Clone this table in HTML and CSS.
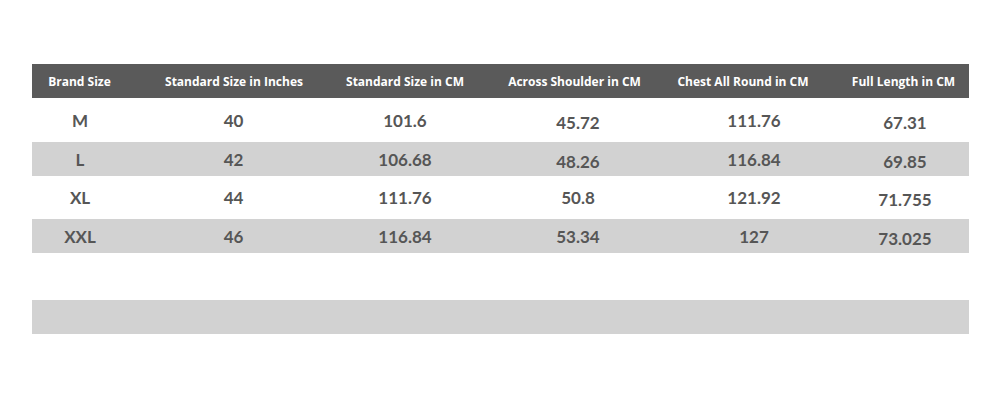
FILE: index.html
```html
<!DOCTYPE html>
<html>
<head>
<meta charset="utf-8">
<link rel="stylesheet" href="styles.css">
</head>
<body>
<div class="chart">
  <div class="row head">
    <div class="c c1">Brand Size</div>
    <div class="c c2">Standard Size in Inches</div>
    <div class="c c3">Standard Size in CM</div>
    <div class="c c4">Across Shoulder in CM</div>
    <div class="c c5">Chest All Round in CM</div>
    <div class="c c6">Full Length in CM</div>
  </div>
  <div class="row data tall">
    <div class="c c1">M</div>
    <div class="c c2">40</div>
    <div class="c c3">101.6</div>
    <div class="c c4 low">45.72</div>
    <div class="c c5">111.76</div>
    <div class="c c6 low">67.31</div>
  </div>
  <div class="row data grey">
    <div class="c c1">L</div>
    <div class="c c2">42</div>
    <div class="c c3">106.68</div>
    <div class="c c4 low">48.26</div>
    <div class="c c5">116.84</div>
    <div class="c c6 low">69.85</div>
  </div>
  <div class="row data tall">
    <div class="c c1">XL</div>
    <div class="c c2">44</div>
    <div class="c c3">111.76</div>
    <div class="c c4">50.8</div>
    <div class="c c5">121.92</div>
    <div class="c c6 low">71.755</div>
  </div>
  <div class="row data grey">
    <div class="c c1">XXL</div>
    <div class="c c2">46</div>
    <div class="c c3">116.84</div>
    <div class="c c4">53.34</div>
    <div class="c c5">127</div>
    <div class="c c6 low">73.025</div>
  </div>
  <div class="spacer"></div>
  <div class="bar"></div>
</div>
</body>
</html>
```
FILE: styles.css
```css
html, body {
  margin: 0;
  padding: 0;
  background: #ffffff;
}
body {
  padding: 64px 0 0 32px;
  font-family: Lato, "Open Sans", sans-serif;
}
.chart {
  width: 937px;
}
.row {
  display: grid;
  grid-template-columns: 125px 163px 170px 169px 164px 146px;
  align-items: center;
  height: 34px;
}
.c {
  text-align: center;
  white-space: nowrap;
}
.head {
  background: #5a5a5a;
  color: #ffffff;
  font-family: "Open Sans", Lato, sans-serif;
  font-weight: 700;
  font-size: 12px;
}
.head .c1 { padding-right: 30px; }
.head .c2 { padding-right: 9px; }
.head .c5 { padding-left: 4px; }
.head .c6 { padding-left: 15px; }

.data {
  color: #565656;
  font-weight: 700;
  font-size: 17px;
}
.data.tall { height: 44px; }
.data.tall + .grey + .tall { height: 43px; }
.data.grey { background: #d2d2d2; }
.data .c1 { padding-right: 29px; }
.data .c2 { padding-right: 10px; }
.data .c4 { padding-left: 7px; }
.data .c5 { padding-left: 26px; }
.data .c6 { padding-left: 18px; }
.data .low { padding-top: 4px; }

.spacer { height: 47px; }
.bar {
  height: 34px;
  background: #d2d2d2;
}
```
